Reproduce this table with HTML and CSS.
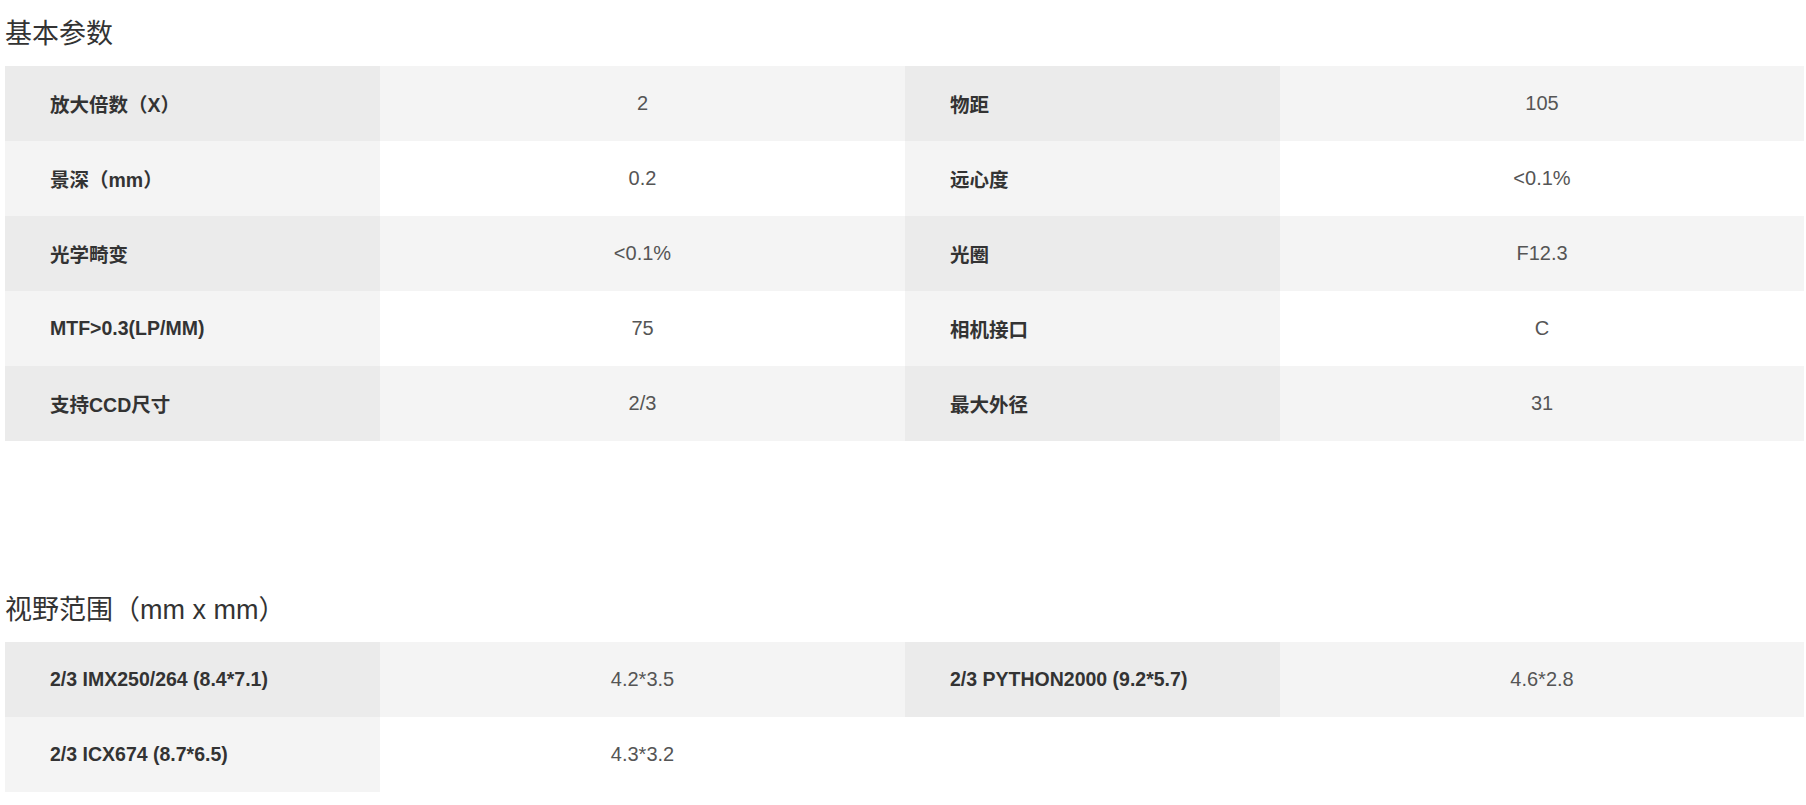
FILE: index.html
```html
<!DOCTYPE html>
<html lang="zh-CN">
<head>
<meta charset="utf-8">
<title>参数</title>
<link rel="stylesheet" href="styles.css">
</head>
<body>
<main class="page">
  <section class="spec">
    <h2 class="spec-title">基本参数</h2>
    <div class="spec-table">
      <div class="spec-row odd">
        <div class="cell label">放大倍数（X）</div><div class="cell value">2</div>
        <div class="cell label">物距</div><div class="cell value">105</div>
      </div>
      <div class="spec-row even">
        <div class="cell label">景深（mm）</div><div class="cell value">0.2</div>
        <div class="cell label">远心度</div><div class="cell value">&lt;0.1%</div>
      </div>
      <div class="spec-row odd">
        <div class="cell label">光学畸变</div><div class="cell value">&lt;0.1%</div>
        <div class="cell label">光圈</div><div class="cell value">F12.3</div>
      </div>
      <div class="spec-row even">
        <div class="cell label">MTF&gt;0.3(LP/MM)</div><div class="cell value">75</div>
        <div class="cell label">相机接口</div><div class="cell value">C</div>
      </div>
      <div class="spec-row odd">
        <div class="cell label">支持CCD尺寸</div><div class="cell value">2/3</div>
        <div class="cell label">最大外径</div><div class="cell value">31</div>
      </div>
    </div>
  </section>
  <section class="spec">
    <h2 class="spec-title">视野范围（mm x mm）</h2>
    <div class="spec-table">
      <div class="spec-row odd">
        <div class="cell label">2/3 IMX250/264 (8.4*7.1)</div><div class="cell value">4.2*3.5</div>
        <div class="cell label">2/3 PYTHON2000 (9.2*5.7)</div><div class="cell value">4.6*2.8</div>
      </div>
      <div class="spec-row even">
        <div class="cell label">2/3 ICX674 (8.7*6.5)</div><div class="cell value">4.3*3.2</div>
      </div>
    </div>
  </section>
</main>
</body>
</html>
```

FILE: styles.css
```css
html, body {
  margin: 0;
  padding: 0;
  background: #fff;
}

.page {
  display: flex;
  flex-direction: column;
  gap: 153px;
  padding: 18px 2px 0 5px;
  font-family: "Liberation Sans", Arial, "Noto Sans CJK SC", sans-serif;
  color: #333;
}

.spec-title {
  margin: 0 0 16px;
  height: 32px;
  line-height: 32px;
  font-size: 27px;
  font-weight: normal;
  color: #333;
  white-space: nowrap;
}

.spec-table {
  display: flex;
  flex-direction: column;
}

.spec-row {
  display: grid;
  grid-template-columns: 375fr 525fr 375fr 524fr;
  height: 75px;
}

.cell {
  display: flex;
  align-items: center;
}

.label {
  padding-left: 45px;
  font-size: 19.5px;
  font-weight: bold;
  color: #333;
}

.value {
  justify-content: center;
  font-size: 20px;
  color: #555;
}

.odd .label { background: #ebebeb; }
.odd .value { background: #f4f4f4; }
.even .label { background: #f4f4f4; }
.even .value { background: #fff; }
```
